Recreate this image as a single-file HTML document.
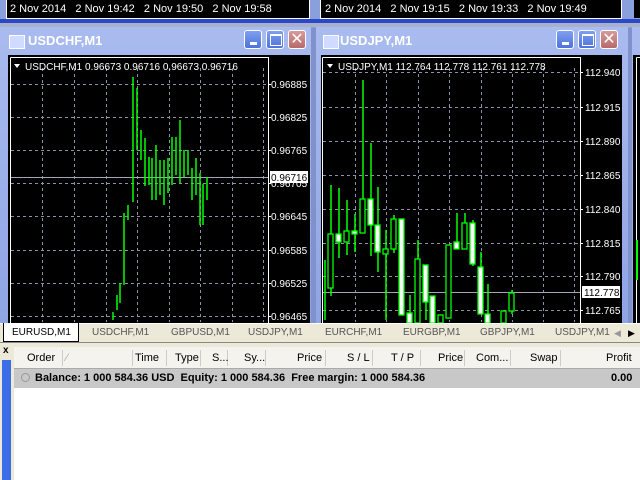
<!DOCTYPE html>
<html><head><meta charset="utf-8"><style>
body{margin:0;width:640px;height:480px;overflow:hidden;background:#7f92cc;font-family:"Liberation Sans",sans-serif;position:relative}
.abs{position:absolute}
.tb{background:linear-gradient(#a9bbef,#8ea4e4);}
.btn{position:absolute;top:30px;width:18px;height:19px;border:1px solid #fff;border-radius:3px;box-sizing:border-box;background:linear-gradient(#7f9ff0,#4d72dc)}
.cls{background:linear-gradient(#d69a9a,#b86a6a)}
.tt{position:absolute;top:33px;color:#fff;font-weight:bold;font-size:13px}
.tab{position:absolute;top:327px;font-size:10px;color:#555}
.hd{position:absolute;top:352px;font-size:11px;color:#000}
.sep{position:absolute;top:350px;width:1px;height:16px;background:#ccc}
</style></head><body>
<div class="abs" style="left:0;top:0;width:640px;height:28px;background:#8aa0dc"></div>
<div class="abs" style="left:6px;top:0;width:302px;height:18px;background:#000;border:1px solid #fff;border-top:none"></div>
<div class="abs" style="left:320px;top:0;width:300px;height:18px;background:#000;border:1px solid #fff;border-top:none"></div>
<div class="abs" style="left:634px;top:0;width:6px;height:18px;background:#000"></div>
<div class="abs" style="left:10px;top:3px;color:#fff;font-size:11px;white-space:pre">2 Nov 2014   2 Nov 19:42   2 Nov 19:50   2 Nov 19:58</div>
<div class="abs" style="left:325px;top:3px;color:#fff;font-size:11px;white-space:pre">2 Nov 2014   2 Nov 19:15   2 Nov 19:33   2 Nov 19:49</div>
<div class="abs" style="left:0;top:19px;width:640px;height:4px;background:#2a48c8"></div>
<div class="abs" style="left:0;top:23px;width:640px;height:4px;background:#a8b0cc"></div>

<div class="abs tb" style="left:0;top:27px;width:311px;height:300px;"></div>
<div class="abs" style="left:9px;top:35px;width:14px;height:12px;background:#cfdcff;border:1px solid #fff"></div>
<div class="tt" style="left:28px">USDCHF,M1</div>
<div class="btn" style="left:244px"><div class="abs" style="left:5px;top:11px;width:7px;height:3px;background:#fff"></div></div>
<div class="btn" style="left:266px"><div class="abs" style="left:3px;top:3px;width:10px;height:9px;border:1px solid #fff;border-top-width:2px"></div></div>
<div class="btn cls" style="left:288px;color:#fff;font-size:16px;text-align:center;line-height:17px">✕</div>
<div class="abs" style="left:8px;top:55px;width:302px;height:270px;background:#000"></div>

<div class="abs tb" style="left:316px;top:27px;width:312px;height:300px;"></div>
<div class="abs" style="left:323px;top:35px;width:14px;height:12px;background:#cfdcff;border:1px solid #fff"></div>
<div class="tt" style="left:340px">USDJPY,M1</div>
<div class="btn" style="left:556px"><div class="abs" style="left:5px;top:11px;width:7px;height:3px;background:#fff"></div></div>
<div class="btn" style="left:578px"><div class="abs" style="left:3px;top:3px;width:10px;height:9px;border:1px solid #fff;border-top-width:2px"></div></div>
<div class="btn cls" style="left:600px;color:#fff;font-size:16px;text-align:center;line-height:17px">✕</div>
<div class="abs" style="left:321px;top:55px;width:301px;height:270px;background:#000"></div>

<div class="abs tb" style="left:632px;top:27px;width:8px;height:300px;"></div>
<div class="abs" style="left:633px;top:55px;width:7px;height:270px;background:#000"></div>

<svg class="abs" style="left:0;top:0" width="640" height="325">
<g stroke="#8a93a8" stroke-dasharray="3,3" stroke-width="1" fill="none">
<path d="M42.5 68V322M74.5 68V322M106.5 68V322M137.5 68V322M169.5 68V322M200.5 68V322M232.5 68V322M263.5 68V322"/>
<path d="M11 84.5H268M11 117.5H268M11 150.5H268M11 183.5H268M11 216.5H268M11 250.5H268M11 283.5H268M11 316.5H268"/>
<path d="M355.5 68V322M386.5 68V322M418.5 68V322M449.5 68V322M481.5 68V322M512.5 68V322M543.5 68V322M574.5 68V322"/>
<path d="M323 72.5H580M323 107.5H580M323 141.5H580M323 175.5H580M323 209.5H580M323 243.5H580M323 276.5H580M323 310.5H580"/>
</g>
<path d="M10.5 57.5H268.5V330M10.5 57.5V330M322.5 57.5H580.5V330M322.5 57.5V330M636.5 57.5H640M636.5 57.5V330" stroke="#fff" fill="none"/>
<g stroke="#fff"><path d="M268 84.5h3M268 117.5h3M268 150.5h3M268 183.5h3M268 216.5h3M268 250.5h3M268 283.5h3M268 316.5h3M580 72.5h3M580 107.5h3M580 141.5h3M580 175.5h3M580 209.5h3M580 243.5h3M580 276.5h3M580 310.5h3"/></g>
<path d="M11 177.5H268M323 292.5H580" stroke="#a0a8b8"/>
<g stroke="#00ff00" stroke-width="1.5" fill="none">
<path d="M113 312V320M117 295V310M120 283V303M124 213V285M128 205V220M133 77V202M137 88V150M141 130V160M145 138V186M149 157V185M152 158V200M156 145V200M160 160V195M164 160V205M168 158V193M172 137V185M176 137V175M180 120V183M184 150V177M188 150V175M192 168V200M196 158V195M200 173V225M203 184V225M207 177V200"/>
<path d="M331 185V296M339 188V258M347 200V255M355 214V252M363 80V233M371 143V256M378 187V272M386 230V320M394 215V253M410 295V320M418 240V320M426 265V320M457 213V249M465 213V249M473 220V266M481 252V314M488 284V320M512 290V314M325 260V320"/>
</g>
<g stroke="#00ff00" stroke-width="1.3">
<rect x="328" y="234" width="5" height="54" fill="#000"/><rect x="336" y="234" width="5" height="8" fill="#fff"/>
<rect x="344" y="231" width="5" height="11" fill="#000"/><rect x="352" y="231" width="5" height="3" fill="#fff"/>
<rect x="360" y="199" width="5" height="34" fill="#000"/><rect x="368" y="199" width="5" height="26" fill="#fff"/>
<rect x="375" y="225" width="5" height="27" fill="#fff"/><rect x="383" y="249" width="5" height="5" fill="#000"/>
<rect x="391" y="219" width="5" height="30" fill="#000"/><rect x="399" y="219" width="5" height="96" fill="#fff"/>
<rect x="407" y="313" width="5" height="10" fill="#fff"/><rect x="415" y="259" width="5" height="64" fill="#000"/>
<rect x="423" y="265" width="5" height="37" fill="#fff"/><rect x="430" y="296" width="5" height="27" fill="#fff"/>
<rect x="438" y="315" width="5" height="8" fill="#000"/><rect x="446" y="245" width="5" height="73" fill="#000"/>
<rect x="454" y="242" width="5" height="7" fill="#fff"/><rect x="462" y="223" width="5" height="26" fill="#000"/>
<rect x="470" y="223" width="5" height="41" fill="#fff"/><rect x="478" y="267" width="5" height="47" fill="#fff"/>
<rect x="485" y="314" width="5" height="9" fill="#fff"/><rect x="501" y="311" width="5" height="12" fill="#000"/>
<rect x="509" y="293" width="5" height="18" fill="#000"/>
</g>
<path d="M637 240V280" stroke="#00ff00" stroke-width="2"/>
<g fill="#fff" font-size="10" font-family="Liberation Sans">
<text x="271" y="88">0.96885</text><text x="271" y="121">0.96825</text><text x="271" y="154">0.96765</text><text x="271" y="187">0.96705</text><text x="271" y="220">0.96645</text><text x="271" y="254">0.96585</text><text x="271" y="287">0.96525</text><text x="271" y="320">0.96465</text>
<text x="585" y="76">112.940</text><text x="585" y="111">112.915</text><text x="585" y="145">112.890</text><text x="585" y="179">112.865</text><text x="585" y="213">112.840</text><text x="585" y="247">112.815</text><text x="585" y="280">112.790</text><text x="585" y="314">112.765</text>
<text x="25" y="70">USDCHF,M1  0.96673 0.96716 0.96673 0.96716</text>
<text x="338" y="70">USDJPY,M1  112.764 112.778 112.761 112.778</text>
</g>
<path d="M14 64h6l-3 4z M327 64h6l-3 4z" fill="#fff"/>
<rect x="270" y="171" width="38" height="12" fill="#fff"/><text x="271" y="181" font-size="10" font-family="Liberation Sans">0.96716</text>
<rect x="582" y="286" width="38" height="12" fill="#fff"/><text x="584" y="296" font-size="10" font-family="Liberation Sans">112.778</text>
</svg>

<div class="abs" style="left:0;top:323px;width:640px;height:20px;background:#ece9d8;border-top:1px solid #fff"></div>
<div class="abs" style="left:3px;top:323px;width:76px;height:19px;background:#fff;border:1px solid #000;border-top:none;box-sizing:border-box"></div>
<div class="tab" style="left:12px;color:#000">EURUSD,M1</div>
<div class="tab" style="left:92px">USDCHF,M1</div>
<div class="tab" style="left:171px">GBPUSD,M1</div>
<div class="tab" style="left:248px">USDJPY,M1</div>
<div class="tab" style="left:325px">EURCHF,M1</div>
<div class="tab" style="left:403px">EURGBP,M1</div>
<div class="tab" style="left:480px">GBPJPY,M1</div>
<div class="tab" style="left:555px">USDJPY,M1</div>
<div class="tab" style="left:614px;color:#999;font-size:9px;top:328px">◀</div>
<div class="tab" style="left:628px;color:#000;font-size:9px;top:328px">▶</div>
<div class="abs" style="left:0;top:342px;width:640px;height:1px;background:#888"></div>
<div class="abs" style="left:0;top:343px;width:640px;height:137px;background:#ece9d8"></div>
<div class="abs" style="left:3px;top:345px;font-size:10px;font-weight:bold">x</div>
<div class="abs" style="left:2px;top:360px;width:9px;height:120px;background:#3b6ee6"></div>
<div class="abs" style="left:14px;top:347px;width:626px;height:133px;background:#fff"></div>
<div class="abs" style="left:14px;top:347px;width:626px;height:21px;background:#f4f3ee;border-bottom:1px solid #aaa"></div>
<div class="sep" style="left:62px"></div><div class="sep" style="left:132px"></div><div class="sep" style="left:166px"></div><div class="sep" style="left:200px"></div><div class="sep" style="left:227px"></div><div class="sep" style="left:265px"></div><div class="sep" style="left:325px"></div><div class="sep" style="left:372px"></div><div class="sep" style="left:420px"></div><div class="sep" style="left:464px"></div><div class="sep" style="left:510px"></div><div class="sep" style="left:560px"></div>
<div class="hd" style="left:27px">Order</div><div class="hd" style="left:66px;color:#aaa">⁄</div>
<div class="hd" style="left:135px">Time</div><div class="hd" style="left:175px">Type</div><div class="hd" style="left:212px">S...</div><div class="hd" style="left:244px">Sy...</div>
<div class="hd" style="left:297px">Price</div><div class="hd" style="left:347px">S / L</div><div class="hd" style="left:391px">T / P</div><div class="hd" style="left:438px">Price</div>
<div class="hd" style="left:476px">Com...</div><div class="hd" style="left:530px">Swap</div><div class="hd" style="left:606px">Profit</div>
<div class="abs" style="left:14px;top:369px;width:626px;height:19px;background:#c8c8c8"></div>
<div class="abs" style="left:21px;top:373px;width:7px;height:7px;border:1px solid #999;border-radius:50%"></div>
<div class="abs" style="left:35px;top:372px;font-size:11px;font-weight:bold">Balance: 1 000 584.36 USD&nbsp; Equity: 1 000 584.36&nbsp; Free margin: 1 000 584.36</div>
<div class="abs" style="left:611px;top:372px;font-size:11px;font-weight:bold">0.00</div>
</body></html>
